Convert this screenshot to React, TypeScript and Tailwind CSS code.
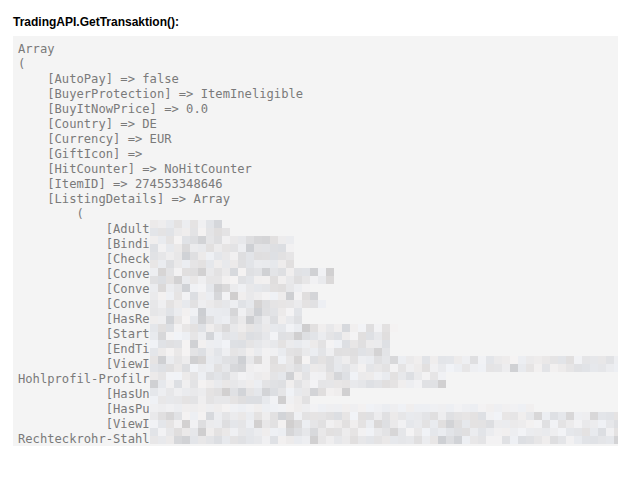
const lines: string[] = [
  'Array',
  '(',
  '    [AutoPay] => false',
  '    [BuyerProtection] => ItemIneligible',
  '    [BuyItNowPrice] => 0.0',
  '    [Country] => DE',
  '    [Currency] => EUR',
  '    [GiftIcon] =>',
  '    [HitCounter] => NoHitCounter',
  '    [ItemID] => 274553348646',
  '    [ListingDetails] => Array',
  '        (',
  '            [Adult',
  '            [Bindi',
  '            [Check',
  '            [Conve',
  '            [Conve',
  '            [Conve',
  '            [HasRe',
  '            [Start',
  '            [EndTi',
  '            [ViewI',
  'Hohlprofil-Profilr',
  '            [HasUn',
  '            [HasPu',
  '            [ViewI',
  'Rechteckrohr-Stahl'
];

// right edge (page x) of each 8px row of the redaction mosaic, starting at y=220
const rowEnds = [
  222, 230, 293, 293, 293, 293, 333, 333, 310, 317, 325, 302, 302, 397,
  390, 390, 390, 618, 618, 445, 445, 350, 310, 527, 617, 617, 617, 617
];

function makeRand(seed: number) {
  let s = seed;
  return () => {
    s = (s * 1103515245 + 12345) % 2147483648;
    return s / 2147483648;
  };
}

function Mosaic() {
  const rand = makeRand(42);
  return (
    <div className="absolute left-[137px] top-[184px] flex flex-col">
      {rowEnds.map((end, r) => {
        const cols = Math.ceil((end - 150) / 8);
        const light = r === 23;
        return (
          <div key={r} className="flex h-[8px]">
            {Array.from({ length: cols }).map((_, c) => {
              const x = rand();
              let v = light ? 237 + Math.floor(x * 6) : 222 + Math.floor(x * 22);
              if (!light && rand() > 0.9) v = 206 + Math.floor(rand() * 12);
              const tint = Math.floor(rand() * 5) - 2;
              return (
                <div
                  key={c}
                  className="w-[8px] h-[8px]"
                  style={{ backgroundColor: `rgb(${v + tint},${v},${v - tint + 2})` }}
                />
              );
            })}
          </div>
        );
      })}
    </div>
  );
}

export default function App() {
  return (
    <div className="w-[620px] h-[488px] bg-white pl-[13px] pt-[15px]">
      <h3 className="text-[12px] leading-[14px] font-bold text-black font-['Liberation_Sans',Arial,sans-serif] mb-[7px]">
        TradingAPI.GetTransaktion():
      </h3>
      <div className="relative w-[605px] h-[410px] bg-[#f4f4f4] overflow-hidden">
        <pre className="pl-[5px] pt-[6px] text-[12.15px] leading-[15px] text-[#7a7a7a] font-['DejaVu_Sans_Mono',monospace]">
          {lines.join('\n')}
        </pre>
        <Mosaic />
      </div>
    </div>
  );
}
